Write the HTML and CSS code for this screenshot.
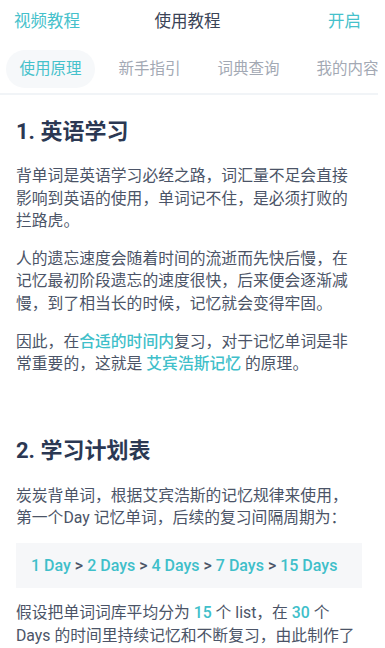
FILE: index.html
```html
<!DOCTYPE html>
<html lang="zh">
<head>
  <meta charset="UTF-8">
  <meta name="viewport" content="width=device-width, initial-scale=1.0">
  <title>使用教程</title>
  <link rel="stylesheet" href="styles.css">
</head>
<body>
  <div class="page">

    <!-- Top bar -->
    <div class="topbar">
      <a class="top-link left">视频教程</a>
      <div class="top-title">使用教程</div>
      <a class="top-link right">开启</a>
    </div>

    <!-- Tabs -->
    <div class="tabs">
      <div class="tab active">使用原理</div>
      <div class="tab">新手指引</div>
      <div class="tab">词典查询</div>
      <div class="tab">我的内容</div>
    </div>

    <!-- Content -->
    <div class="content">
      <h2 class="section-title">1. 英语学习</h2>
      <p>背单词是英语学习必经之路，词汇量不足会直接影响到英语的使用，单词记不住，是必须打败的拦路虎。</p>
      <p>人的遗忘速度会随着时间的流逝而先快后慢，在记忆最初阶段遗忘的速度很快，后来便会逐渐减慢，到了相当长的时候，记忆就会变得牢固。</p>
      <p>因此，在<span class="hl">合适的时间内</span>复习，对于记忆单词是非常重要的，这就是 <span class="hl">艾宾浩斯记忆</span> 的原理。</p>

      <h2 class="section-title second">2. 学习计划表</h2>
      <p>炭炭背单词，根据艾宾浩斯的记忆规律来使用，第一个Day 记忆单词，后续的复习间隔周期为：</p>
      <div class="plan">
        <span class="hl">1 Day</span> &gt; <span class="hl">2 Days</span> &gt; <span class="hl">4 Days</span> &gt; <span class="hl">7 Days</span> &gt; <span class="hl">15 Days</span>
      </div>
      <p>假设把单词词库平均分为 <span class="hl">15</span> 个 list，在 <span class="hl">30</span> 个 Days 的时间里持续记忆和不断复习，由此制作了学习计划表。</p>
    </div>

  </div>
</body>
</html>
```

FILE: styles.css
```css
/* General */
body {
  margin: 0;
  background: #fff;
  font-family: Roboto, "Noto Sans CJK SC", sans-serif;
  overflow: hidden;
}

.page {
  width: 378px;
  height: 648px;
  overflow: hidden;
}

/* Top bar */
.topbar {
  display: grid;
  grid-template-columns: 1fr auto 1fr;
  align-items: center;
  height: 40px;
  padding: 0 17px 0 14px;
  font-size: 16.5px;
}

.top-link {
  color: #45c1cb;
}

.top-link.right {
  justify-self: end;
}

.top-title {
  color: #3a4356;
}

/* Tabs */
.tabs {
  display: flex;
  gap: 10px;
  padding: 10px 0 5px 6px;
  border-bottom: 2px solid #f1f4f7;
  overflow: hidden;
  white-space: nowrap;
}

.tab {
  flex-shrink: 0;
  height: 38px;
  line-height: 38px;
  padding: 0 13.5px;
  border-radius: 19px;
  font-size: 15.5px;
  color: #a3a9b4;
}

.tab.active {
  background: #f6f8fa;
  color: #45c1cb;
}

/* Content */
.content {
  padding: 0 16px;
}

.section-title {
  margin: 21px 0 18px;
  font-size: 22px;
  line-height: 31px;
  font-weight: 700;
  color: #2b3853;
}

.section-title.second {
  margin-top: 59px;
  margin-bottom: 19px;
}

p {
  margin: 0 0 15px;
  font-size: 15.8px;
  line-height: 22.6px;
  color: #4b5467;
}

.hl {
  color: #3fbfca;
}

p .hl {
  font-weight: 500;
}

.plan {
  margin: -2px 0 14px;
  padding: 0 15px;
  height: 45px;
  line-height: 45px;
  white-space: nowrap;
  background: #f6f7f9;
  font-size: 16px;
  font-weight: 500;
  color: #4b5467;
}
```
